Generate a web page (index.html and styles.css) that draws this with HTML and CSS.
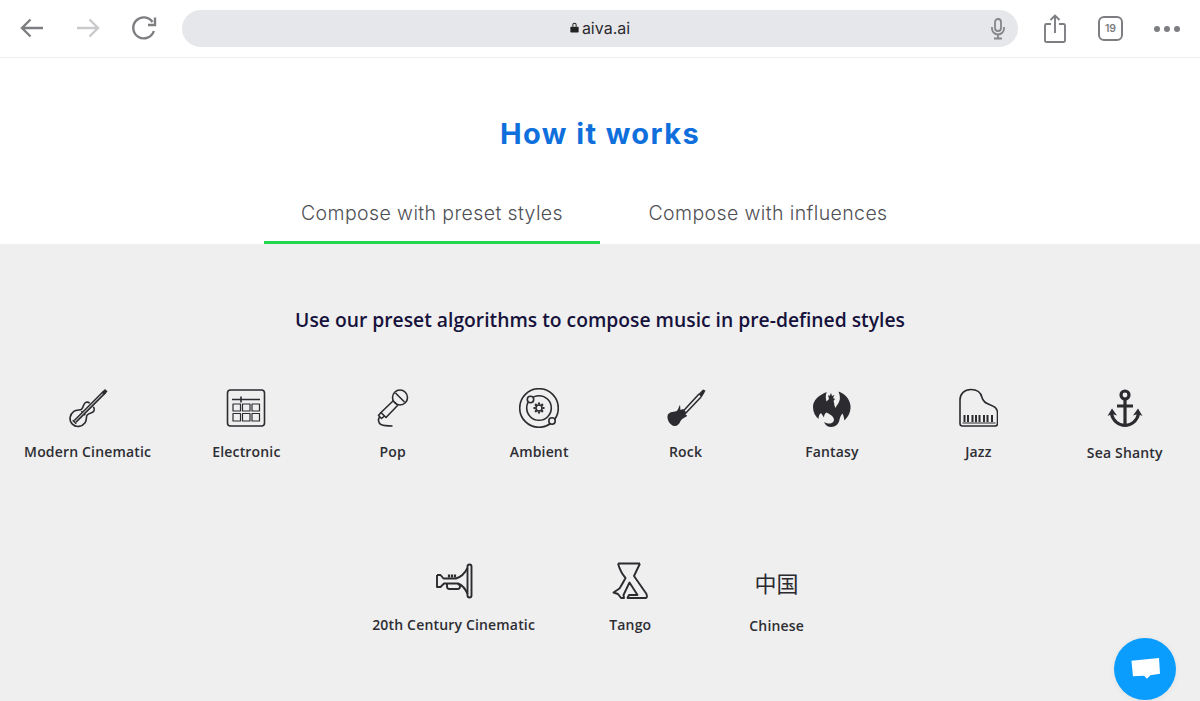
FILE: index.html
```html
<!DOCTYPE html>
<html lang="en">
<head>
<meta charset="utf-8">
<title>AIVA - How it works</title>
<link rel="stylesheet" href="styles.css">
</head>
<body>
<header class="toolbar">
  <div class="nav-icons">
    <svg class="tb-icon" viewBox="0 0 28 28"><path d="M25 14H4M12.500 5.500 4 14l8.500 8.500"/></svg>
    <svg class="tb-icon faded" viewBox="0 0 28 28"><path d="M3 14h21M15.500 5.500 24 14l-8.500 8.500"/></svg>
    <svg class="tb-icon" viewBox="0 0 28 28"><path d="M22.500 8A10.500 10.500 0 1 0 23.800 17M25 3.500V11H18"/></svg>
  </div>
  <div class="address">
    <span class="url"><svg class="lock" viewBox="0 0 10 12"><path d="M1 5.200h8a.6.6 0 0 1 .6.6v5a.8.8 0 0 1-.8.8H1.200a.8.8 0 0 1-.8-.8v-5a.6.6 0 0 1 .6-.6zM2.600 5V3.200a2.400 2.400 0 0 1 4.800 0V5H6.300V3.200a1.300 1.300 0 0 0-2.600 0V5z"/></svg>aiva.ai</span>
    <svg class="mic" viewBox="0 0 16 22"><rect x="5" y="1" width="6" height="12" rx="3"/><path d="M2 9v1.500a6 6 0 0 0 12 0V9M8 16.500v4M4 20.500h8"/></svg>
  </div>
  <div class="action-icons">
    <svg class="share" viewBox="0 0 24 30"><path d="M8 10H3.500A1.500 1.500 0 0 0 2 11.500v15A1.500 1.500 0 0 0 3.500 28h17a1.500 1.500 0 0 0 1.500-1.500v-15a1.500 1.500 0 0 0-1.500-1.500H16M12 19V2M7.500 6 12 1.500 16.500 6"/></svg>
    <span class="tabs-count">19</span>
    <span class="dots"><i></i><i></i><i></i></span>
  </div>
</header>

<main>
  <section class="intro">
    <h1>How it works</h1>
    <nav class="tabs">
      <a class="tab active">Compose with preset styles</a>
      <a class="tab">Compose with influences</a>
    </nav>
  </section>

  <section class="panel">
    <h2>Use our preset algorithms to compose music in pre-defined styles</h2>
    <ul class="styles">
      <li class="style">
        <svg class="ico" viewBox="0 0 40 40"><g transform="translate(18.500 22) rotate(45)"><path d="M-2.500-7C-6-7-6.500-4-5.500-1.500-5-.5-4 1-4 3c0 2-3.500 3.500-4 7-.7 5 2.500 10 8 10s8.700-5 8-10c-.5-3.500-4-5-4-7 0-2 1-3.500 1.500-4.500C6.500-4 6-7 2.500-7"/><path d="M-1.200 16V-25H1.200V16M-2.500 17H2.500M-1.800 4.500h-1M1.800 4.500h1"/><path class="solid" d="M-1.800-28H1.800V-23H-1.800z"/></g></svg>
        <span>Modern Cinematic</span>
      </li>
      <li class="style">
        <svg class="ico" viewBox="0 0 40 40"><rect x="1.500" y="2" width="37" height="36" rx="3"/><path d="M6 11.500h28M15 8.500v6"/><path class="thin" d="M7 16h7.500v7H7zM16.500 16H24v7h-7.500zM26 16h7.500v7H26zM7 25.500h7.500v7.500H7zM16.500 25.500H24v7.500h-7.500zM26 25.500h7.500v7.500H26z"/></svg>
        <span>Electronic</span>
      </li>
      <li class="style">
        <svg class="ico" viewBox="0 0 40 40"><circle cx="27" cy="9.500" r="7.500"/><path d="M21.500 14 25 17.500M22.500 5 31.500 14M20.500 12.500 8 24.500l5 5 12-12.500"/><path d="M8 24.500 5.500 27.500l3 3 3-2.500M6.500 29c-1.500 2-1.500 6 1.500 7.500 3 1.300 7 1.500 11.500 1.500"/></svg>
        <span>Pop</span>
      </li>
      <li class="style">
        <svg class="ico" viewBox="0 0 40 40"><circle cx="20" cy="20" r="19.300"/><circle cx="20" cy="20" r="12.300"/><g><circle cx="20" cy="20" r="3"/><path class="thick-dash" d="M20 14.500v2M20 23.500v2M14.500 20h2M23.500 20h2M16.100 16.100l1.400 1.400M22.500 22.500l1.400 1.400M16.100 23.900l1.400-1.400M22.500 17.500l1.400-1.400"/></g><circle class="bg" cx="11.500" cy="11.500" r="3.200"/><circle class="bg" cx="33" cy="33" r="3.200"/></svg>
        <span>Ambient</span>
      </li>
      <li class="style">
        <svg class="ico" viewBox="0 0 40 40"><path class="solid" d="M14 17C12 20 12.500 23 9 23.500 5 24 2 25 1.500 28 1 32 4 37 8 38 11 38.500 13.500 36 14.500 33 15.500 31 18 30 20.500 28.500 21.500 27.500 20.500 26.500 19 27L20 24 17 21 14.500 22C14 20.500 14.500 19 14 17z"/><path d="M15 25.500 33 6M17.500 27.500 35 9"/><path class="solid" d="M32.500 6 37 1.500 39.500 2.500 38 5.500 35.500 9.500z"/></svg>
        <span>Rock</span>
      </li>
      <li class="style">
        <svg class="ico" viewBox="0 0 40 40"><path class="solid" d="M14.700 4C7 7 1 12 1 19 1 24 3 28 6.500 31 6.500 28 7.500 26 9 25 10 26.500 11 28 12 29.500 12 27 13 25.500 14.500 24.500 17 26 20 27 21.500 30 23 33 20.500 35.500 17.500 35.500 15.500 35.500 14 35 12 34 13 37 16 39 19 39 23.500 39 27 36 27.500 31.500 28 29.500 29 27 30.500 25.500 31.500 27.500 32 30 32.500 32.500 36 29 39 24 38.500 18 38 11 33 6 26.500 3.500 28 7 28.500 11 27 14 25.500 17 24 18 23.500 20 22 18 22.500 15 21.500 13L23 11 21 10 22.500 7 20 8 19 5 17.500 8 16 7 17 11 14.500 13.500C13.500 10 13.500 7 14.700 4z"/></svg>
        <span>Fantasy</span>
      </li>
      <li class="style">
        <svg class="ico" viewBox="0 0 40 40"><path d="M2 12C2 5.500 6.500 1.500 13 1.500c7 0 10 3.500 11 8 1 4.500 4 6 8.500 7.500 4 1.300 7 3.500 7 8v10.500c0 1.500-1 2.500-2.500 2.500H4.500C3 38 2 37 2 35.500z"/><path class="thin" d="M4.500 35h33"/><path class="solid" d="M5.500 27h2v7h-2zM9 27h2v7H9zM13.500 27h2v7h-2zM17 27h2v7h-2zM20.500 27h2v7h-2zM25 27h2v7h-2zM28.500 27h2v7h-2zM33 27h2v7h-2z"/></svg>
        <span>Jazz</span>
      </li>
      <li class="style sea">
        <svg class="ico" viewBox="0 0 40 40"><circle class="heavy" cx="20" cy="7" r="4"/><path class="heavy" d="M20 11V36M12 18h16"/><path class="heavy" d="M6.500 26C8 33 14 37.500 20 37.500S32 33 33.500 26"/><path class="solid" d="M2.500 28 7 20.500 12 27.500 7 26zM37.500 28 33 20.500 28 27.500 33 26z"/></svg>
        <span>Sea Shanty</span>
      </li>
      <li class="style">
        <svg class="ico bold" viewBox="0 0 40 40"><path d="M3 14h3.500l3 3.500H22C27 16 31 12 33.500 7M3 14V26H6.500L10 22.500H24C28 24 31.500 28 33.500 33M13 23v2.500c0 1.500 1 2.500 2.500 2.500h8c1.500 0 2.500-1 2.500-2.500 0-1.500-1-2.500-2.500-2.500"/><rect x="33.500" y="3.500" width="4" height="33" rx="2"/><path class="thick-dash" d="M15 13.500v3M18 13.500v3M21 13.500v3"/></svg>
        <span>20th Century Cinematic</span>
      </li>
      <li class="style">
        <svg class="ico bold" viewBox="0 0 40 40"><path d="M8 2.500H30M8 2.500C9.500 8 12 13 15.500 17 13.500 21 11 25 9.500 27.500L3.500 31.500 8 33 11 37H14L13.500 34 19.500 21.500 27.500 34H19L17.500 37H36Q37.500 37 36.500 33L24 15 30 2.500"/></svg>
        <span>Tango</span>
      </li>
      <li class="style chinese">
        <span class="glyphs">中国</span>
        <span>Chinese</span>
      </li>
    </ul>
  </section>
</main>

<button class="chat" aria-label="Chat"><svg viewBox="0 0 30 24"><path d="M.5 3.500 29 .5 30 17l-10 1.500-3.500 3.500-3-3-11.500.5z"/></svg></button>
</body>
</html>
```

FILE: styles.css
```css
* { box-sizing: border-box; }
html, body { margin: 0; height: 701px; overflow: hidden; background: #fff; }
body { font-family: "Open Sans", "Noto Sans", sans-serif; }

.toolbar { height: 58px; border-bottom: 1px solid #eeeeee; display: flex; align-items: flex-start; padding: 10px 20px 0 18px; background: #fff; }
.nav-icons { display: flex; gap: 28px; width: 164px; padding-top: 4px; }
.tb-icon { width: 28px; height: 28px; fill: none; stroke: #7d7e82; stroke-width: 2.400; }
.tb-icon.faded { stroke: #c9cacc; }
.address { width: 836px; height: 37px; background: #e6e7ea; border-radius: 18.500px; display: flex; align-items: center; justify-content: center; position: relative; padding-bottom: 2px; }
.url { font-size: 16px; color: #2b2b30; display: flex; align-items: center; gap: 3px; font-family: Inter, "Open Sans", sans-serif; }
.lock { width: 9px; height: 11px; fill: #222; }
.mic { position: absolute; right: 12px; top: 8px; width: 16px; height: 22px; fill: none; stroke: #858689; stroke-width: 1.800; }
.action-icons { flex: 1; display: flex; align-items: center; height: 37px; padding-left: 25px; }
.share { width: 24px; height: 30px; fill: none; stroke: #7d7e82; stroke-width: 1.900; }
.tabs-count { width: 25px; height: 25px; margin-left: 31px; border: 2px solid #7d7e82; border-radius: 6px; display: flex; align-items: center; justify-content: center; font-size: 10.500px; font-weight: 600; color: #7d7e82; font-family: Inter, sans-serif; }
.dots { display: flex; gap: 4px; margin-left: 31px; }
.dots i { width: 6px; height: 6px; border-radius: 50%; background: #7d7e82; }

.intro { height: 186px; display: flex; flex-direction: column; align-items: center; }
h1 { margin: 58px 0 0; height: 36px; font-family: Inter, sans-serif; font-size: 29px; line-height: 36px; font-weight: 700; letter-spacing: 1.400px; color: #0f6fdc; }
.tabs { display: flex; margin-top: 32px; }
.tab { width: 336px; height: 60px; display: flex; justify-content: center; padding-top: 16px; font-family: Inter, sans-serif; font-size: 19.500px; line-height: 26px; font-weight: 300; letter-spacing: .400px; color: #4f4f55; white-space: pre; }
.tab.active { border-bottom: 3px solid #22d84f; }

.panel { height: 457px; background: #efefef; padding-top: 62px; }
h2 { margin: 0; text-align: center; font-size: 19.300px; line-height: 28px; font-weight: 600; color: #16123c; }
.styles { list-style: none; margin: 54px 0 0; padding: 0; display: flex; flex-wrap: wrap; justify-content: center; row-gap: 111px; }
.style { min-width: 146.400px; padding: 0 22px; display: flex; flex-direction: column; align-items: center; gap: 14px; font-size: 14px; line-height: 19px; font-weight: 600; letter-spacing: .170px; color: #2d2d33; height: 62px; white-space: nowrap; }
.ico { width: 40px; height: 40px; flex: none; fill: none; stroke: #2b2b30; stroke-width: 1.600; stroke-linejoin: round; }
.ico.bold { stroke-width: 1.900; }
.ico .solid { fill: #2b2b30; stroke: none; }
.ico .thin { stroke-width: 1.200; }
.ico .bg { fill: #efefef; }
.ico .heavy { stroke-width: 3.200; }
.ico .thick-dash { stroke-width: 2.200; }
.sea > span, .chinese > span:last-child { position: relative; top: 1px; }
.glyphs { height: 40px; width: 50px; display: flex; align-items: center; justify-content: center; flex: none; font-family: "Noto Sans CJK SC", sans-serif; font-size: 22px; line-height: 40px; font-weight: 400; letter-spacing: 0; color: #2b2b30; padding-top: 2px; }

.chat { position: fixed; left: 1114px; top: 638px; width: 62px; height: 62px; border: 0; padding: 0; border-radius: 50%; background: #0a9dfe; display: flex; align-items: center; justify-content: center; box-shadow: 0 1px 6px rgba(0,0,0,.06); }
.chat svg { width: 29px; height: 24px; fill: #fff; }
```
